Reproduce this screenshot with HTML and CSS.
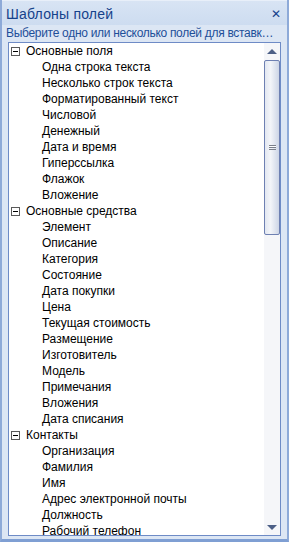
FILE: index.html
```html
<!DOCTYPE html>
<html>
	<head>
		<meta charset="UTF-8">
		<title>Шаблоны полей</title>
		<link rel="stylesheet" href="styles.css">
	</head>
	<body>
		<div class="pane">
			<div class="titleBar">
				<span class="title">Шаблоны полей</span>
				<span class="close">&#x2715;</span>
			</div>
			<div class="hint">Выберите одно или несколько полей для вставки в документ</div>
			<div class="listBox">
				<div class="tree">
					<div class="group"><span class="toggle"></span>Основные поля</div>
					<div class="item">Одна строка текста</div>
					<div class="item">Несколько строк текста</div>
					<div class="item">Форматированный текст</div>
					<div class="item">Числовой</div>
					<div class="item">Денежный</div>
					<div class="item">Дата и время</div>
					<div class="item">Гиперссылка</div>
					<div class="item">Флажок</div>
					<div class="item">Вложение</div>
					<div class="group"><span class="toggle"></span>Основные средства</div>
					<div class="item">Элемент</div>
					<div class="item">Описание</div>
					<div class="item">Категория</div>
					<div class="item">Состояние</div>
					<div class="item">Дата покупки</div>
					<div class="item">Цена</div>
					<div class="item">Текущая стоимость</div>
					<div class="item">Размещение</div>
					<div class="item">Изготовитель</div>
					<div class="item">Модель</div>
					<div class="item">Примечания</div>
					<div class="item">Вложения</div>
					<div class="item">Дата списания</div>
					<div class="group"><span class="toggle"></span>Контакты</div>
					<div class="item">Организация</div>
					<div class="item">Фамилия</div>
					<div class="item">Имя</div>
					<div class="item">Адрес электронной почты</div>
					<div class="item">Должность</div>
					<div class="item">Рабочий телефон</div>
				</div>
				<div class="scrollBar">
					<div class="arrow up"></div>
					<div class="thumb"><span class="grip"></span></div>
					<div class="track"></div>
					<div class="arrow down"></div>
				</div>
			</div>
		</div>
	</body>
</html>
```

FILE: styles.css
```css
body{
	margin: 0;
	padding: 0;
	font-family: "Liberation Sans", "DejaVu Sans", sans-serif;
}
.pane{
	width: 289px;
	height: 542px;
	box-sizing: border-box;
	background: #dce6f4;
	border-left: 2px solid #8eaad8;
	border-right: 2px solid #8eaad8;
	border-bottom: 3px solid #7f9fd3;
	display: flex;
	flex-direction: column;
}
.titleBar{
	height: 25px;
	display: flex;
	align-items: center;
	justify-content: space-between;
	padding: 1px 6px 0 4px;
	background: linear-gradient(#d8e4f4, #cddcf0);
	border-top: 1px solid #e8eff9;
	box-sizing: border-box;
}
.title{
	font-size: 14px;
	letter-spacing: 0.2px;
	color: #15428b;
}
.close{
	font-size: 12px;
	font-weight: bold;
	color: #15428b;
}
.hint{
	height: 17px;
	line-height: 17px;
	padding: 0 9px 0 4px;
	font-size: 12px;
	letter-spacing: -0.3px;
	color: #1e4f99;
	white-space: nowrap;
	overflow: hidden;
	text-overflow: ellipsis;
}
.listBox{
	margin: 0 6px;
	height: 494px;
	box-sizing: border-box;
	border: 1px solid #6e8bc6;
	background: #fff;
	display: flex;
}
.tree{
	flex: 1;
	overflow: hidden;
	font-size: 12px;
	color: #000;
}
.group, .item{
	height: 16px;
	line-height: 16px;
	white-space: nowrap;
}
.group{
	display: flex;
	align-items: center;
	padding-left: 2px;
}
.toggle{
	position: relative;
	width: 7px;
	height: 7px;
	border: 1px solid #5a5a5a;
	margin-right: 6px;
}
.toggle::after{
	content: "";
	position: absolute;
	left: 1px;
	top: 3px;
	width: 5px;
	height: 1px;
	background: #000;
}
.item{
	padding-left: 33px;
}
.scrollBar{
	width: 16px;
	background: #f5f6f9;
	display: flex;
	flex-direction: column;
}
.arrow{
	height: 16px;
	display: flex;
	align-items: center;
	justify-content: center;
}
.arrow::after{
	content: "";
	border-left: 5px solid transparent;
	border-right: 5px solid transparent;
}
.up::after{
	border-bottom: 5px solid #4c5f86;
}
.down::after{
	border-top: 5px solid #4c5f86;
}
.thumb{
	height: 175px;
	margin: 1px 0 0;
	box-sizing: border-box;
	border: 1px solid #6e80b2;
	border-radius: 2px;
	background: linear-gradient(to right, #e2e7f1, #f3f5f9 40%, #cdd5e6);
	display: flex;
	align-items: center;
	justify-content: center;
}
.grip{
	width: 7px;
	height: 5px;
	border-top: 1px solid #7a7f8a;
	border-bottom: 1px solid #7a7f8a;
	background: linear-gradient(#fff 0 1px, #7a7f8a 1px 2px, transparent 2px 3px, #7a7f8a 3px 4px, transparent 4px);
	box-sizing: border-box;
}
.track{
	flex: 1;
}
```
